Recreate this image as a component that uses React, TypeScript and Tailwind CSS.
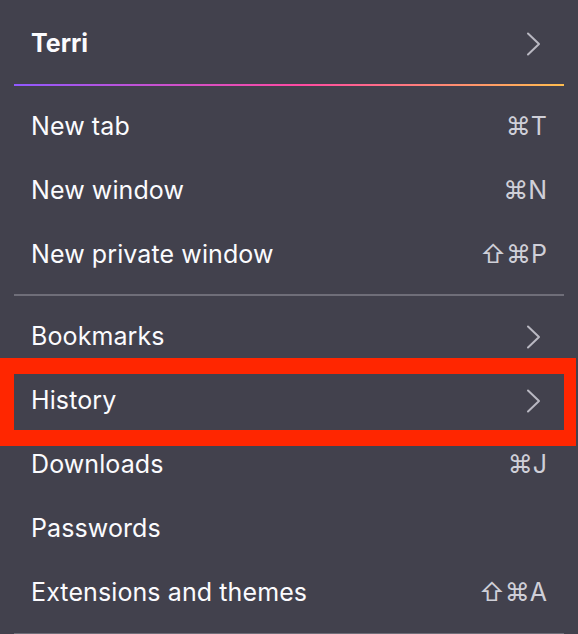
import { ReactNode } from "react";

type Item = { label: string; shortcut?: ReactNode; arrow?: boolean; highlight?: boolean };

const topItems: Item[] = [
  { label: "New tab", shortcut: "⌘T" },
  { label: "New window", shortcut: "⌘N" },
  { label: "New private window", shortcut: "⇧⌘P" },
];

const bottomItems: Item[] = [
  { label: "Bookmarks", arrow: true },
  { label: "History", arrow: true, highlight: true },
  { label: "Downloads", shortcut: "⌘J" },
  { label: "Passwords" },
  { label: "Extensions and themes", shortcut: "⇧⌘A" },
];

function Chevron() {
  return (
    <svg width="16" height="24" viewBox="0 0 16 24" className="mr-[5px]" fill="none">
      <path d="M2 1.5 L13 12 L2 22.5" stroke="#b9b8c2" strokeWidth="2" strokeLinecap="round" strokeLinejoin="round" />
    </svg>
  );
}

function Row({ item }: { item: Item }) {
  return (
    <div className="relative flex h-[64px] items-center justify-between px-[17px]">
      <span className="text-[25px] tracking-[0.1px] text-[#fbfbfe]">{item.label}</span>
      {item.shortcut && (
        <span className="text-[25px] text-[#cfcfd8] font-['Inter','DejaVu_Sans',sans-serif]">{item.shortcut}</span>
      )}
      {item.arrow && <Chevron />}
      {item.highlight && (
        <div className="absolute -top-[11px] -bottom-[13px] -left-[14px] -right-[12px] border-[#ff2600] border-t-[16px] border-b-[16px] border-l-[14px] border-r-[12px]" />
      )}
    </div>
  );
}

export default function App() {
  return (
    <div className="w-[578px] h-[634px] overflow-hidden bg-[#42414d] px-[14px] font-['Inter',sans-serif]">
      <div className="flex h-[84px] items-center justify-between px-[17px] pt-[4px]">
        <span className="text-[25px] font-bold text-[#fbfbfe]">Terri</span>
        <Chevron />
      </div>
      <div className="h-[2px] bg-[linear-gradient(90deg,#9059ff_0%,#ff4aa2_52%,#ffbd4f_100%)]" />
      <div className="mt-[9px]">
        {topItems.map((it) => (
          <Row key={it.label} item={it} />
        ))}
      </div>
      <div className="mt-[7px] h-[2px] bg-[#6f6e79]" />
      <div className="mt-[9px]">
        {bottomItems.map((it) => (
          <Row key={it.label} item={it} />
        ))}
      </div>
      <div className="mt-[8px] h-[2px] bg-[#6f6e79]" />
    </div>
  );
}
